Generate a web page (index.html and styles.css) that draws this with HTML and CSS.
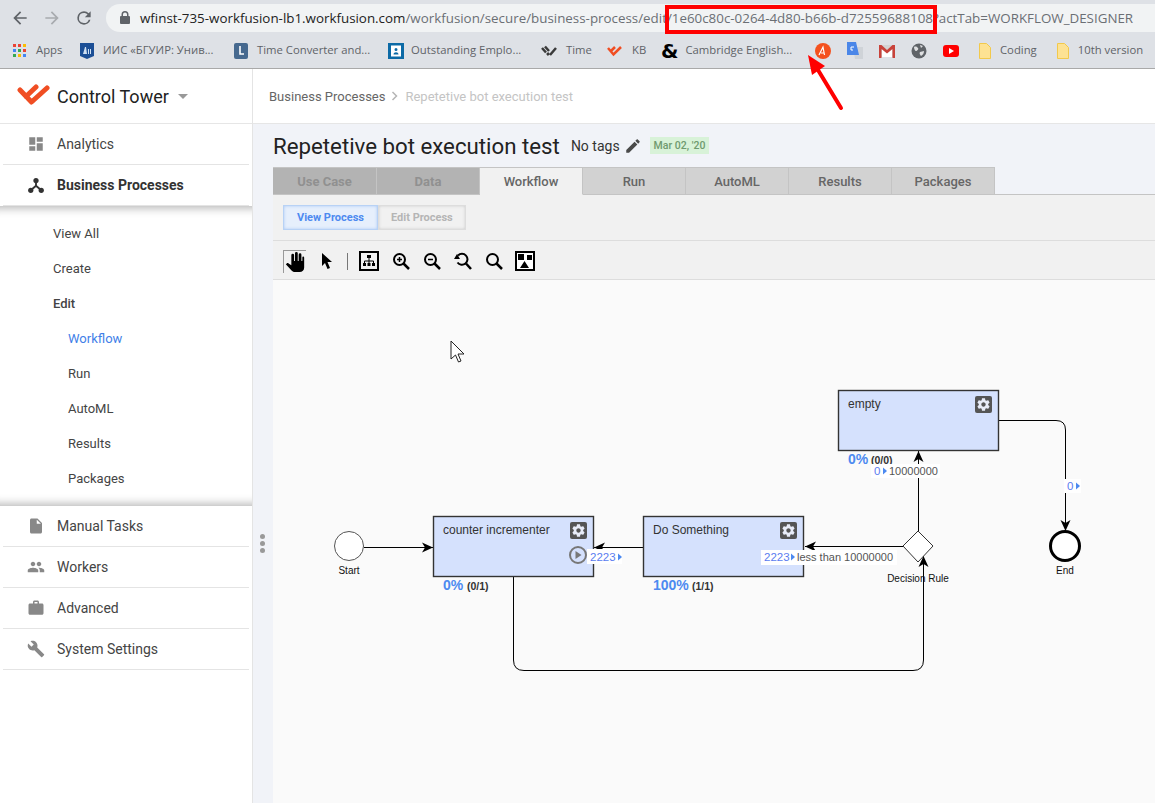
FILE: index.html
```html
<!DOCTYPE html>
<html lang="en">
<head>
    <meta charset="UTF-8">
    <meta name="viewport" content="width=device-width, initial-scale=1.0">
    <title>Repetetive bot execution test</title>
    <link rel="stylesheet" href="styles.css">
</head>
<body>
    <!-- shared icons -->
    <svg class="defs" width="0" height="0">
        <symbol id="gear" viewBox="0 0 24 24">
            <path d="M19.43 12.98c.04-.32.07-.64.07-.98s-.03-.66-.07-.98l2.11-1.65c.19-.15.24-.42.12-.64l-2-3.46c-.12-.22-.39-.3-.61-.22l-2.49 1c-.52-.4-1.08-.73-1.69-.98l-.38-2.65C14.46 2.18 14.25 2 14 2h-4c-.25 0-.46.18-.49.42l-.38 2.65c-.61.25-1.17.59-1.69.98l-2.49-1c-.23-.09-.49 0-.61.22l-2 3.46c-.13.22-.07.49.12.64l2.11 1.65c-.04.32-.07.65-.07.98s.03.66.07.98l-2.11 1.65c-.19.15-.24.42-.12.64l2 3.46c.12.22.39.3.61.22l2.49-1c.52.4 1.08.73 1.69.98l.38 2.65c.03.24.24.42.49.42h4c.25 0 .46-.18.49-.42l.38-2.65c.61-.25 1.17-.59 1.69-.98l2.49 1c.23.09.49 0 .61-.22l2-3.46c.12-.22.07-.49-.12-.64l-2.11-1.65zM12 15.5c-1.93 0-3.5-1.57-3.5-3.5s1.57-3.5 3.5-3.5 3.5 1.57 3.5 3.5-1.57 3.5-3.5 3.5z"/>
        </symbol>
    </svg>

    <!-- browser bar -->
    <div class="browser">
        <div class="toolbar">
            <svg class="nav" width="20" height="20" viewBox="0 0 24 24"><path fill="#5f6368" d="M20 11H7.83l5.59-5.59L12 4l-8 8 8 8 1.41-1.41L7.83 13H20z"/></svg>
            <svg class="nav" width="20" height="20" viewBox="0 0 24 24"><path fill="#a8abaf" d="M4 11h12.17l-5.59-5.59L12 4l8 8-8 8-1.41-1.41L16.17 13H4z"/></svg>
            <svg class="nav" width="20" height="20" viewBox="0 0 24 24"><path fill="#5f6368" d="M17.65 6.35A7.96 7.96 0 0 0 12 4a8 8 0 1 0 7.73 10h-2.08A6 6 0 1 1 12 6c1.66 0 3.14.69 4.22 1.78L13 11h7V4z"/></svg>
            <div class="address">
                <svg width="12" height="14" viewBox="0 0 12 14"><path fill="#5f6368" d="M10 5H9.5V3.5a3.5 3.5 0 0 0-7 0V5H2a1 1 0 0 0-1 1v6a1 1 0 0 0 1 1h8a1 1 0 0 0 1-1V6a1 1 0 0 0-1-1zM4 3.5a2 2 0 0 1 4 0V5H4z"/></svg>
                <span class="url"><b>wfinst-735-workfusion-lb1.workfusion.com</b>/workfusion/secure/business-process/edit/1e60c80c-0264-4d80-b66b-d72559688108?actTab=WORKFLOW_DESIGNER</span>
            </div>
        </div>
        <div class="bookmarks">
            <div class="bm apps">
                <svg width="14" height="14" viewBox="0 0 14 14">
                    <path fill="#ea4335" d="M0 0h3v3H0z"/><path fill="#ea4335" d="M5 0h3v3H5z"/><path fill="#fbbc05" d="M10 0h3v3h-3z"/>
                    <path fill="#4285f4" d="M0 5h3v3H0z"/><path fill="#34a853" d="M5 5h3v3H5z"/><path fill="#ea4335" d="M10 5h3v3h-3z"/>
                    <path fill="#34a853" d="M0 10h3v3H0z"/><path fill="#fbbc05" d="M5 10h3v3H5z"/><path fill="#4285f4" d="M10 10h3v3h-3z"/>
                </svg>
                <span>Apps</span>
            </div>
            <div class="bm iis">
                <svg width="14" height="16" viewBox="0 0 14 16"><path fill="#1c4f96" d="M0 0h14v13l-7 3-7-3z"/><path fill="#cfe0f2" d="M3 11l2-7h1l1 7zM8 6h1v5H8zM10 6h1v5h-1z"/></svg>
                <span>ИИС «БГУИР: Унив...</span>
            </div>
            <div class="bm tc">
                <svg width="14" height="16" viewBox="0 0 14 16"><rect width="14" height="16" rx="2" fill="#46698f"/><path d="M6 3v8h4" fill="none" stroke="#fff" stroke-width="1.6"/></svg>
                <span>Time Converter and...</span>
            </div>
            <div class="bm oe">
                <svg width="16" height="16" viewBox="0 0 16 16"><rect width="16" height="16" fill="#0c6aa6"/><rect x="3" y="2.5" width="10" height="11" fill="#fff"/><path fill="#0c6aa6" d="M8 5a1.5 1.5 0 1 1 0 3 1.5 1.5 0 0 1 0-3zM5.5 11.5c0-3 5-3 5 0z"/></svg>
                <span>Outstanding Emplo...</span>
            </div>
            <div class="bm tm">
                <svg width="16" height="12" viewBox="0 0 16 12"><path d="M1 3l4 4.500M4 1.500l4 4.500M6 10l2-2M9 10l6-7" fill="none" stroke="#3a3a3a" stroke-width="2.500"/></svg>
                <span>Time</span>
            </div>
            <div class="bm kb">
                <svg width="16" height="12" viewBox="0 0 16 12"><path d="M1 3l5.500 6.500L14 2M4 6l4-4" fill="none" stroke="#f04e23" stroke-width="2.500"/></svg>
                <span>KB</span>
            </div>
            <div class="bm ce">
                <span class="amp">&amp;</span>
                <span>Cambridge English...</span>
            </div>
            <div class="bm-icon red-a"><svg width="16" height="16" viewBox="0 0 16 16"><circle cx="8" cy="8" r="8" fill="#f4511e"/><path d="M4 12l4-8 1.500 8M6 10h3" fill="none" stroke="#fff" stroke-width="1.200"/></svg></div>
            <div class="bm-icon gt"><svg width="16" height="18" viewBox="0 0 16 18"><path fill="#cfd3d8" d="M6 5h10v12H8z"/><path fill="#4a86e8" d="M0 0h9l3 13H0z"/><path d="M7 5H4v3h2" fill="none" stroke="#fff"/></svg></div>
            <div class="bm-icon gm"><svg width="16" height="14" viewBox="0 0 16 14"><path fill="#d3d3d3" d="M1 1h14v12H1z"/><path fill="#fff" d="M3 3l5 4 5-4v10H3z"/><path fill="#c9423a" d="M0 1h2.500L8 6l5.500-5H16v13h-2.500V5L8 9.500 2.500 5v9H0z"/></svg></div>
            <div class="bm-icon gl"><svg width="16" height="16" viewBox="0 0 16 16"><circle cx="8" cy="8" r="7.500" fill="#5f6368"/><path fill="#dedfe1" d="M3 4c2-1 3 0 4 1S6 8 5 8 3 6 3 4zM9 9l4-1c0 2-1 4-3 5-1-1-2-3-1-4zM9 2l3 1-2 2z"/></svg></div>
            <div class="bm-icon yt"><svg width="16" height="12" viewBox="0 0 16 12"><rect width="16" height="12" rx="3" fill="#f00"/><path fill="#fff" d="M6 3l5 3-5 3z"/></svg></div>
            <div class="bm folder">
                <svg width="12" height="16" viewBox="0 0 12 16"><path d="M.5.5h7l4 4v11H.5z" fill="#fde293" stroke="#f2c94c"/></svg>
                <span>Coding</span>
            </div>
            <div class="bm folder last">
                <svg width="12" height="16" viewBox="0 0 12 16"><path d="M.5.5h7l4 4v11H.5z" fill="#fde293" stroke="#f2c94c"/></svg>
                <span>10th version</span>
            </div>
        </div>
    </div>

    <div class="app">
        <!-- left menu -->
        <aside class="sidebar">
            <div class="brand">
                <svg width="34" height="24" viewBox="0 0 34 24"><path d="M3 6L14.500 18L30 4M9 12.500L19 3" fill="none" stroke="#f04e23" stroke-width="5" stroke-linecap="round" stroke-linejoin="round"/></svg>
                <span class="brand-name">Control Tower</span>
                <span class="caret"></span>
            </div>
            <nav class="menu">
                <a class="menu-item">
                    <svg width="18" height="18" viewBox="0 0 24 24"><path d="M3 13h8V3H3v10zm0 8h8v-6H3v6zm10 0h8V11h-8v10zm0-18v6h8V3h-8z"/></svg>
                    <span>Analytics</span>
                </a>
                <a class="menu-item active">
                    <svg width="18" height="18" viewBox="0 0 24 24"><circle cx="12" cy="6" r="3.500"/><circle cx="5" cy="19" r="3.500"/><circle cx="19" cy="19" r="3.500"/><path d="M12 6v7l-7 6M12 13l7 6" fill="none" stroke-width="2.500"/></svg>
                    <span>Business Processes</span>
                </a>
                <div class="submenu">
                    <a>View All</a>
                    <a>Create</a>
                    <a class="current">Edit</a>
                    <a class="deep selected">Workflow</a>
                    <a class="deep">Run</a>
                    <a class="deep">AutoML</a>
                    <a class="deep">Results</a>
                    <a class="deep">Packages</a>
                </div>
                <a class="menu-item">
                    <svg width="18" height="18" viewBox="0 0 24 24"><path d="M6 2c-1.100 0-1.990.9-1.990 2L4 20c0 1.100.89 2 1.990 2H18c1.100 0 2-.9 2-2V8l-6-6H6zm7 7V3.500L18.500 9H13z"/></svg>
                    <span>Manual Tasks</span>
                </a>
                <a class="menu-item">
                    <svg width="18" height="18" viewBox="0 0 24 24"><path d="M16 11c1.660 0 2.990-1.340 2.990-3S17.660 5 16 5c-1.660 0-3 1.340-3 3s1.340 3 3 3zm-8 0c1.660 0 2.990-1.340 2.990-3S9.660 5 8 5C6.340 5 5 6.340 5 8s1.340 3 3 3zm0 2c-2.330 0-7 1.170-7 3.500V19h14v-2.500c0-2.330-4.670-3.500-7-3.500zm8 0c-.29 0-.62.02-.97.05 1.160.84 1.970 1.970 1.970 3.450V19h6v-2.500c0-2.330-4.670-3.500-7-3.500z"/></svg>
                    <span>Workers</span>
                </a>
                <a class="menu-item">
                    <svg width="18" height="18" viewBox="0 0 24 24"><path d="M20 6h-4V4c0-1.110-.89-2-2-2h-4c-1.110 0-2 .89-2 2v2H4c-1.110 0-1.990.89-1.990 2L2 19c0 1.110.89 2 2 2h16c1.110 0 2-.89 2-2V8c0-1.110-.89-2-2-2zm-6 0h-4V4h4v2z"/></svg>
                    <span>Advanced</span>
                </a>
                <a class="menu-item">
                    <svg width="18" height="18" viewBox="0 0 24 24"><path d="M22.700 19l-9.100-9.100c.9-2.300.4-5-1.500-6.900-2-2-5-2.400-7.400-1.300L9 6 6 9 1.600 4.700C.4 7.100.9 10.100 2.900 12.100c1.900 1.900 4.600 2.400 6.900 1.500l9.100 9.100c.4.4 1 .4 1.400 0l2.300-2.300c.5-.4.5-1.100.1-1.400z"/></svg>
                    <span>System Settings</span>
                </a>
            </nav>
        </aside>

        <main class="main">
            <div class="crumbs">
                <span>Business Processes</span>
                <svg width="8" height="10" viewBox="0 0 8 10"><path d="M1.500 1l4 4-4 4" fill="none" stroke="#b5b5b5" stroke-width="1.500"/></svg>
                <span class="crumb-last">Repetetive bot execution test</span>
            </div>
            <div class="body-row">
                <div class="splitter"><i></i><i></i><i></i></div>
                <div class="page">
                    <div class="title-row">
                        <h1>Repetetive bot execution test</h1>
                        <span class="tags">No tags</span>
                        <svg class="pencil" width="18" height="18" viewBox="0 0 24 24"><path fill="#4a4a4a" d="M3 17.250V21h3.750L17.810 9.940l-3.750-3.750L3 17.250zM20.710 7.040c.39-.39.39-1.020 0-1.410l-2.340-2.340c-.39-.39-1.020-.39-1.410 0l-1.830 1.830 3.750 3.750 1.830-1.830z"/></svg>
                        <span class="date">Mar 02, '20</span>
                    </div>
                    <div class="tabs">
                        <a class="tab disabled">Use Case</a>
                        <a class="tab disabled">Data</a>
                        <a class="tab active">Workflow</a>
                        <a class="tab">Run</a>
                        <a class="tab">AutoML</a>
                        <a class="tab">Results</a>
                        <a class="tab">Packages</a>
                    </div>
                    <div class="modes">
                        <button class="mode on">View Process</button>
                        <button class="mode">Edit Process</button>
                    </div>
                    <div class="tools">
                        <span class="tool pressed">
                            <svg width="22" height="22" viewBox="0 0 24 24"><path d="M22 7v11c0 3-2 5-5 5h-5c-1.500 0-2.500-.5-3.500-1.500L2 14.500l1-1c.6-.5 1.400-.5 2 0l3 2V4.500a1.500 1.500 0 0 1 3 0V11h1V2.500a1.500 1.500 0 0 1 3 0V11h1V4a1.500 1.500 0 0 1 3 0v7h1V7a1 1 0 0 1 2 0z"/></svg>
                        </span>
                        <span class="tool">
                            <svg width="16" height="18" viewBox="0 0 16 18"><path d="M3 1v13l3-3 2.500 6 2.500-1-2.500-6H13z"/></svg>
                        </span>
                        <span class="tool-sep"></span>
                        <span class="tool">
                            <svg width="20" height="20" viewBox="0 0 20 20"><rect x="1" y="1" width="18" height="18" fill="none" stroke="#000" stroke-width="2"/><path d="M8 4h4v3H8zM4 12h3v3H4zM8.500 12h3v3h-3zM13 12h3v3h-3z"/><path d="M10 7v3M5.500 12v-2h9v2M10 10v2" fill="none" stroke="#000"/></svg>
                        </span>
                        <span class="tool">
                            <svg width="18" height="18" viewBox="0 0 18 18"><circle cx="7.500" cy="7.500" r="5.500" fill="none" stroke="#000" stroke-width="2"/><path d="M11.500 11.500L17 17" stroke="#000" stroke-width="2.500"/><path d="M5 7.500h5M7.500 5v5" stroke="#000" stroke-width="1.500"/></svg>
                        </span>
                        <span class="tool">
                            <svg width="18" height="18" viewBox="0 0 18 18"><circle cx="7.500" cy="7.500" r="5.500" fill="none" stroke="#000" stroke-width="2"/><path d="M11.500 11.500L17 17" stroke="#000" stroke-width="2.500"/><path d="M5 7.500h5" stroke="#000" stroke-width="1.500"/></svg>
                        </span>
                        <span class="tool">
                            <svg width="18" height="18" viewBox="0 0 18 18"><path d="M4 3.500a5.500 5.500 0 1 1-.5 7" fill="none" stroke="#000" stroke-width="2"/><path d="M0 7h6L3 2z"/><path d="M12 11.500L17 17" stroke="#000" stroke-width="2.500"/></svg>
                        </span>
                        <span class="tool">
                            <svg width="18" height="18" viewBox="0 0 18 18"><circle cx="7.500" cy="7.500" r="5.500" fill="none" stroke="#000" stroke-width="2"/><path d="M11.500 11.500L17 17" stroke="#000" stroke-width="2.500"/></svg>
                        </span>
                        <span class="tool fit">
                            <svg width="20" height="20" viewBox="0 0 20 20"><rect x="1" y="1" width="18" height="18" fill="#fff" stroke="#000" stroke-width="2"/><path d="M3 3h6v6H3zM12 4h5v5h-5zM9.500 10l4.500 7H5z"/></svg>
                        </span>
                    </div>
                    <div class="canvas">
                        <!-- viewBox uses screen coordinates, the canvas starts at 273,280 -->
                        <svg class="diagram" width="882" height="523" viewBox="273 280 882 523">
                            <defs>
                                <marker id="arrow" markerWidth="12" markerHeight="12" refX="11" refY="6" orient="auto" markerUnits="userSpaceOnUse">
                                    <path d="M0 1L11 6L0 11L3 6z" fill="#000"/>
                                </marker>
                            </defs>

                            <!-- edges -->
                            <path class="edge" d="M364 547.500H433" marker-end="url(#arrow)"/>
                            <path class="edge" d="M644 547.500H594" marker-end="url(#arrow)"/>
                            <path class="edge" d="M903 546.500H805" marker-end="url(#arrow)"/>
                            <path class="edge" d="M918.500 532V451" marker-end="url(#arrow)"/>
                            <path class="edge" d="M999 420.500H1056Q1065.500 420.500 1065.500 430V531" marker-end="url(#arrow)"/>
                            <path class="edge" d="M513.500 577V660Q513.500 670.500 524 670.500H913Q923.500 670.500 923.500 660V556" marker-end="url(#arrow)"/>

                            <!-- start / end -->
                            <circle cx="349" cy="546" r="14.500" fill="#fff" stroke="#555" stroke-width="1"/>
                            <text class="small" x="349" y="574" text-anchor="middle">Start</text>
                            <circle cx="1065" cy="546" r="14.500" fill="#fff" stroke="#000" stroke-width="3"/>
                            <text class="small" x="1065" y="574" text-anchor="middle">End</text>

                            <!-- decision -->
                            <path d="M918 531L933 546L918 562L903 546z" fill="#fff" stroke="#333"/>
                            <text class="small" x="918" y="582" text-anchor="middle">Decision Rule</text>
                            <path d="M918 556l5-1 5 1-5-5z" fill="none"/>

                            <!-- counter incrementer -->
                            <rect class="node" x="433.500" y="516.500" width="160" height="60"/>
                            <text class="node-name" x="443" y="534">counter incrementer</text>
                            <rect x="570" y="522" width="17" height="17" rx="2" fill="#555"/>
                            <use href="#gear" x="571" y="523" width="15" height="15" fill="#e8ecf8"/>
                            <circle cx="578" cy="555" r="8" fill="none" stroke="#777" stroke-width="2"/>
                            <path d="M575.500 551l6 4-6 4z" fill="#777"/>
                            <rect x="587" y="549" width="35" height="15" fill="#fff"/>
                            <text class="count" x="590" y="561">2223</text>
                            <path class="tri" d="M618 553.500l4 3.500-4 3.500z"/>
                            <text class="pct" x="443" y="590">0%</text>
                            <text class="ratio" x="467" y="590">(0/1)</text>

                            <!-- do something -->
                            <rect class="node" x="643.500" y="516.500" width="160" height="60"/>
                            <text class="node-name" x="653" y="534">Do Something</text>
                            <rect x="780" y="522" width="17" height="17" rx="2" fill="#555"/>
                            <use href="#gear" x="781" y="523" width="15" height="15" fill="#e8ecf8"/>
                            <rect x="761" y="550" width="136" height="15" fill="#fff"/>
                            <text class="count" x="764" y="561">2223</text>
                            <path class="tri" d="M791 553.500l4 3.500-4 3.500z"/>
                            <text class="label" x="797" y="561">less than 10000000</text>
                            <text class="pct" x="653" y="590">100%</text>
                            <text class="ratio" x="692" y="590">(1/1)</text>

                            <!-- empty -->
                            <rect class="node" x="838.500" y="390.500" width="160" height="60"/>
                            <text class="node-name" x="848" y="408">empty</text>
                            <rect x="975" y="396" width="17" height="17" rx="2" fill="#555"/>
                            <use href="#gear" x="976" y="397" width="15" height="15" fill="#e8ecf8"/>
                            <text class="pct" x="848" y="464">0%</text>
                            <text class="ratio" x="871" y="464">(0/0)</text>
                            <rect x="871" y="464" width="69" height="14" fill="#fff"/>
                            <text class="count" x="874" y="475">0</text>
                            <path class="tri" d="M883 467.500l4 3.500-4 3.500z"/>
                            <text class="label" x="889" y="475">10000000</text>
                            <rect x="1064" y="479" width="17" height="14" fill="#fff"/>
                            <text class="count" x="1067" y="490">0</text>
                            <path class="tri" d="M1076 482.500l4 3.500-4 3.500z"/>

                            <!-- mouse pointer -->
                            <path d="M451 341V359L455.500 355L458.500 362L461 361L458 354H464z" fill="#fff" stroke="#222"/>
                        </svg>
                    </div>
                </div>
            </div>
        </main>
    </div>

    <!-- red annotation over the screenshot -->
    <div class="mark"></div>
    <svg class="pointer" width="60" height="70" viewBox="0 0 60 70">
        <path d="M35 55L9 12" stroke="#f00" stroke-width="4" stroke-linecap="round"/>
        <path d="M2 2L19 13L6 22z" fill="#f00"/>
    </svg>
</body>
</html>
```

FILE: styles.css
```css
/* Page */
html, body {
    margin: 0;
    height: 100%;
    overflow: hidden;
}

body {
    width: 1155px;
    height: 803px;
    position: relative;
    font-family: Roboto, "Liberation Sans", sans-serif;
    color: #333;
    background-color: #fff;
}

.defs {
    position: absolute;
}

/* Browser bar */
.browser {
    height: 68px;
    background-color: #dee1e6;
    border-bottom: 1px solid #a9a9a9;
}

.toolbar {
    height: 34px;
    display: flex;
    align-items: center;
    padding: 2px 0 0 10px;
    gap: 12px;
    box-sizing: border-box;
}

.address {
    flex: 1;
    height: 28px;
    background-color: #f1f3f4;
    border-radius: 14px 0 0 14px;
    display: flex;
    align-items: center;
    padding-left: 13px;
    gap: 9px;
    font-family: "Open Sans", sans-serif;
    font-size: 13.36px;
    color: #6b6f74;
    white-space: nowrap;
    overflow: hidden;
}

.url b {
    font-weight: normal;
    color: #222;
}

.bookmarks {
    height: 34px;
    display: flex;
    align-items: center;
    padding-left: 13px;
    font-family: "Open Sans", sans-serif;
    font-size: 11.3px;
    color: #5f6368;
    white-space: nowrap;
}

.bm {
    display: flex;
    align-items: center;
    gap: 9px;
}

.bm span {
    margin-top: -4px;
}

.bm-icon {
    display: flex;
    align-items: center;
    margin-left: 16px;
}

.apps { width: 67px; }
.iis { width: 154px; }
.tc { width: 154px; }
.oe { width: 153px; gap: 7px; }
.tm { width: 66px; }
.kb { width: 54px; }
.ce { width: 138px; gap: 7px; }

.bm .amp {
    margin-top: 0;
    font-family: "DejaVu Sans", sans-serif;
    font-size: 20px;
    font-weight: bold;
    color: #000;
    line-height: 16px;
}

.folder { margin-left: 20px; }
.last { margin-left: 20px; }

/* App frame */
.app {
    display: flex;
    height: 734px;
}

.sidebar {
    width: 252px;
    flex: none;
    border-right: 1px solid #e4e4e4;
    background-color: #fff;
}

.brand {
    height: 54px;
    display: flex;
    align-items: center;
    padding-left: 17px;
    gap: 6px;
    border-bottom: 1px solid #e6e6e6;
}

.brand-name {
    font-size: 18px;
    color: #222;
}

.caret {
    width: 0;
    height: 0;
    margin-left: 3px;
    border-left: 5px solid transparent;
    border-right: 5px solid transparent;
    border-top: 5px solid #999;
}

.menu-item {
    height: 40px;
    margin: 0 3px;
    padding-left: 24px;
    display: flex;
    align-items: center;
    gap: 12px;
    font-size: 14px;
    color: #444;
    border-bottom: 1px solid #e4e4e4;
}

.menu-item svg {
    fill: #888;
    stroke: #888;
    stroke-width: 0;
}

.menu-item.active {
    font-weight: 700;
    color: #333;
}

.menu-item.active svg {
    fill: #333;
    stroke: #333;
}

.submenu {
    height: 300px;
    padding-top: 10px;
    box-sizing: border-box;
    margin-left: 0;
    font-size: 13px;
    color: #444;
    box-shadow: inset 0 12px 10px -10px rgba(0, 0, 0, 0.3), inset 0 -12px 10px -10px rgba(0, 0, 0, 0.3);
}

.submenu a {
    display: block;
    height: 35px;
    line-height: 35px;
    padding-left: 53px;
}

.submenu .deep {
    padding-left: 68px;
}

.submenu .current {
    font-weight: 500;
}

.submenu .selected {
    color: #3f7fe8;
}

/* Main column */
.main {
    flex: 1;
    min-width: 0;
    display: flex;
    flex-direction: column;
}

.crumbs {
    height: 54px;
    display: flex;
    align-items: center;
    padding-left: 16px;
    gap: 6px;
    font-size: 13px;
    color: #666;
    border-bottom: 1px solid #e6e6e6;
    flex: none;
}

.crumb-last {
    color: #c4c4c4;
}

.body-row {
    flex: 1;
    display: flex;
    background-color: #f1f3f8;
    min-height: 0;
}

.splitter {
    width: 20px;
    flex: none;
    display: flex;
    flex-direction: column;
    align-items: center;
    padding: 410px 2px 0 0;
    box-sizing: border-box;
    gap: 2px;
}

.splitter i {
    width: 5px;
    height: 5px;
    border-radius: 50%;
    background-color: #999;
}

.page {
    flex: 1;
    min-width: 0;
    display: flex;
    flex-direction: column;
}

.title-row {
    height: 43px;
    flex: none;
    display: flex;
    align-items: center;
    gap: 6px;
}

h1 {
    margin: 0 5px 0 0;
    font-size: 22.25px;
    font-weight: 400;
    color: #222;
}

.tags {
    font-size: 14px;
    color: #333;
}

.pencil {
    margin-left: -2px;
}

.date {
    margin-left: 2px;
    padding: 0 4px;
    height: 17px;
    line-height: 17px;
    background-color: #d8f2d8;
    color: #6f9a6f;
    font-size: 10.5px;
    font-weight: 500;
}

/* Tabs */
.tabs {
    height: 28px;
    flex: none;
    display: flex;
    border-bottom: 1px solid #c4c4c4;
    box-sizing: border-box;
}

.tab {
    width: 103px;
    box-sizing: border-box;
    text-align: center;
    line-height: 27px;
    height: 28px;
    font-size: 13px;
    font-weight: 500;
    color: #666;
    background-color: #d2d2d2;
    border: 1px solid #c4c4c4;
    border-left: 0;
}

.tab:first-child {
    width: 104px;
}

.tab.disabled {
    background-color: #b3b3b3;
    color: #909090;
    font-weight: 700;
}

.tab.active {
    background-color: #f1f1f1;
    border-bottom-color: #f1f1f1;
}

.modes {
    height: 46px;
    flex: none;
    box-sizing: border-box;
    padding: 10px 0 0 10px;
    display: flex;
    align-items: flex-start;
    background-color: #f1f1f1;
    border-bottom: 1px solid #ddd;
}

.mode {
    height: 25px;
    padding: 0 12px;
    font-family: inherit;
    font-size: 11px;
    font-weight: 700;
    color: #b5b5b5;
    background-color: #f1f1f1;
    border: 1px solid #ddd;
    box-shadow: inset 0 0 3px #ccc;
}

.mode.on {
    padding: 0 13px;
    color: #4d8af0;
    background-color: #e6effc;
    border-color: #b8d2f5;
    box-shadow: inset 0 0 3px #a9c8f5;
}

.tools {
    height: 39px;
    flex: none;
    box-sizing: border-box;
    display: flex;
    align-items: center;
    padding: 2px 0 0 10px;
    background-color: #f1f1f1;
    border-bottom: 1px solid #ddd;
    gap: 13px;
}

.tool {
    display: flex;
    align-items: center;
    justify-content: center;
}

.tool.pressed {
    width: 23px;
    height: 23px;
    border-left: 1px solid #999;
    border-top: 1px solid #999;
    box-sizing: border-box;
}

.tool-sep {
    width: 1px;
    height: 17px;
    margin: 0 -2px 0 -1px;
    background-color: #777;
}

.tool.fit {
    margin-left: -1px;
}

/* Diagram */
.canvas {
    flex: 1;
    min-height: 0;
    background-color: #fafafa;
}

.diagram {
    display: block;
}

.edge {
    fill: none;
    stroke: #000;
    stroke-width: 1;
}

.node {
    fill: #d5e1fd;
    stroke: #333;
    stroke-width: 1.4;
}

.diagram text {
    font-family: "Liberation Sans", Arial, sans-serif;
}

.node-name {
    font-size: 12px;
    fill: #333;
}

.small {
    font-size: 10px;
    fill: #111;
}

.count {
    font-size: 11.5px;
    fill: #5b7cf0;
}

.label {
    font-size: 11px;
    fill: #555;
}

.tri {
    fill: #4d8af0;
}

.pct {
    font-size: 14px;
    font-weight: 700;
    fill: #4d8af0;
}

.ratio {
    font-size: 10.5px;
    font-weight: 700;
    fill: #333;
}

/* Red annotation */
.mark {
    position: absolute;
    left: 665px;
    top: 5px;
    width: 264px;
    height: 21px;
    border: 4px solid #f00;
}

.pointer {
    position: absolute;
    left: 806px;
    top: 53px;
}
```
